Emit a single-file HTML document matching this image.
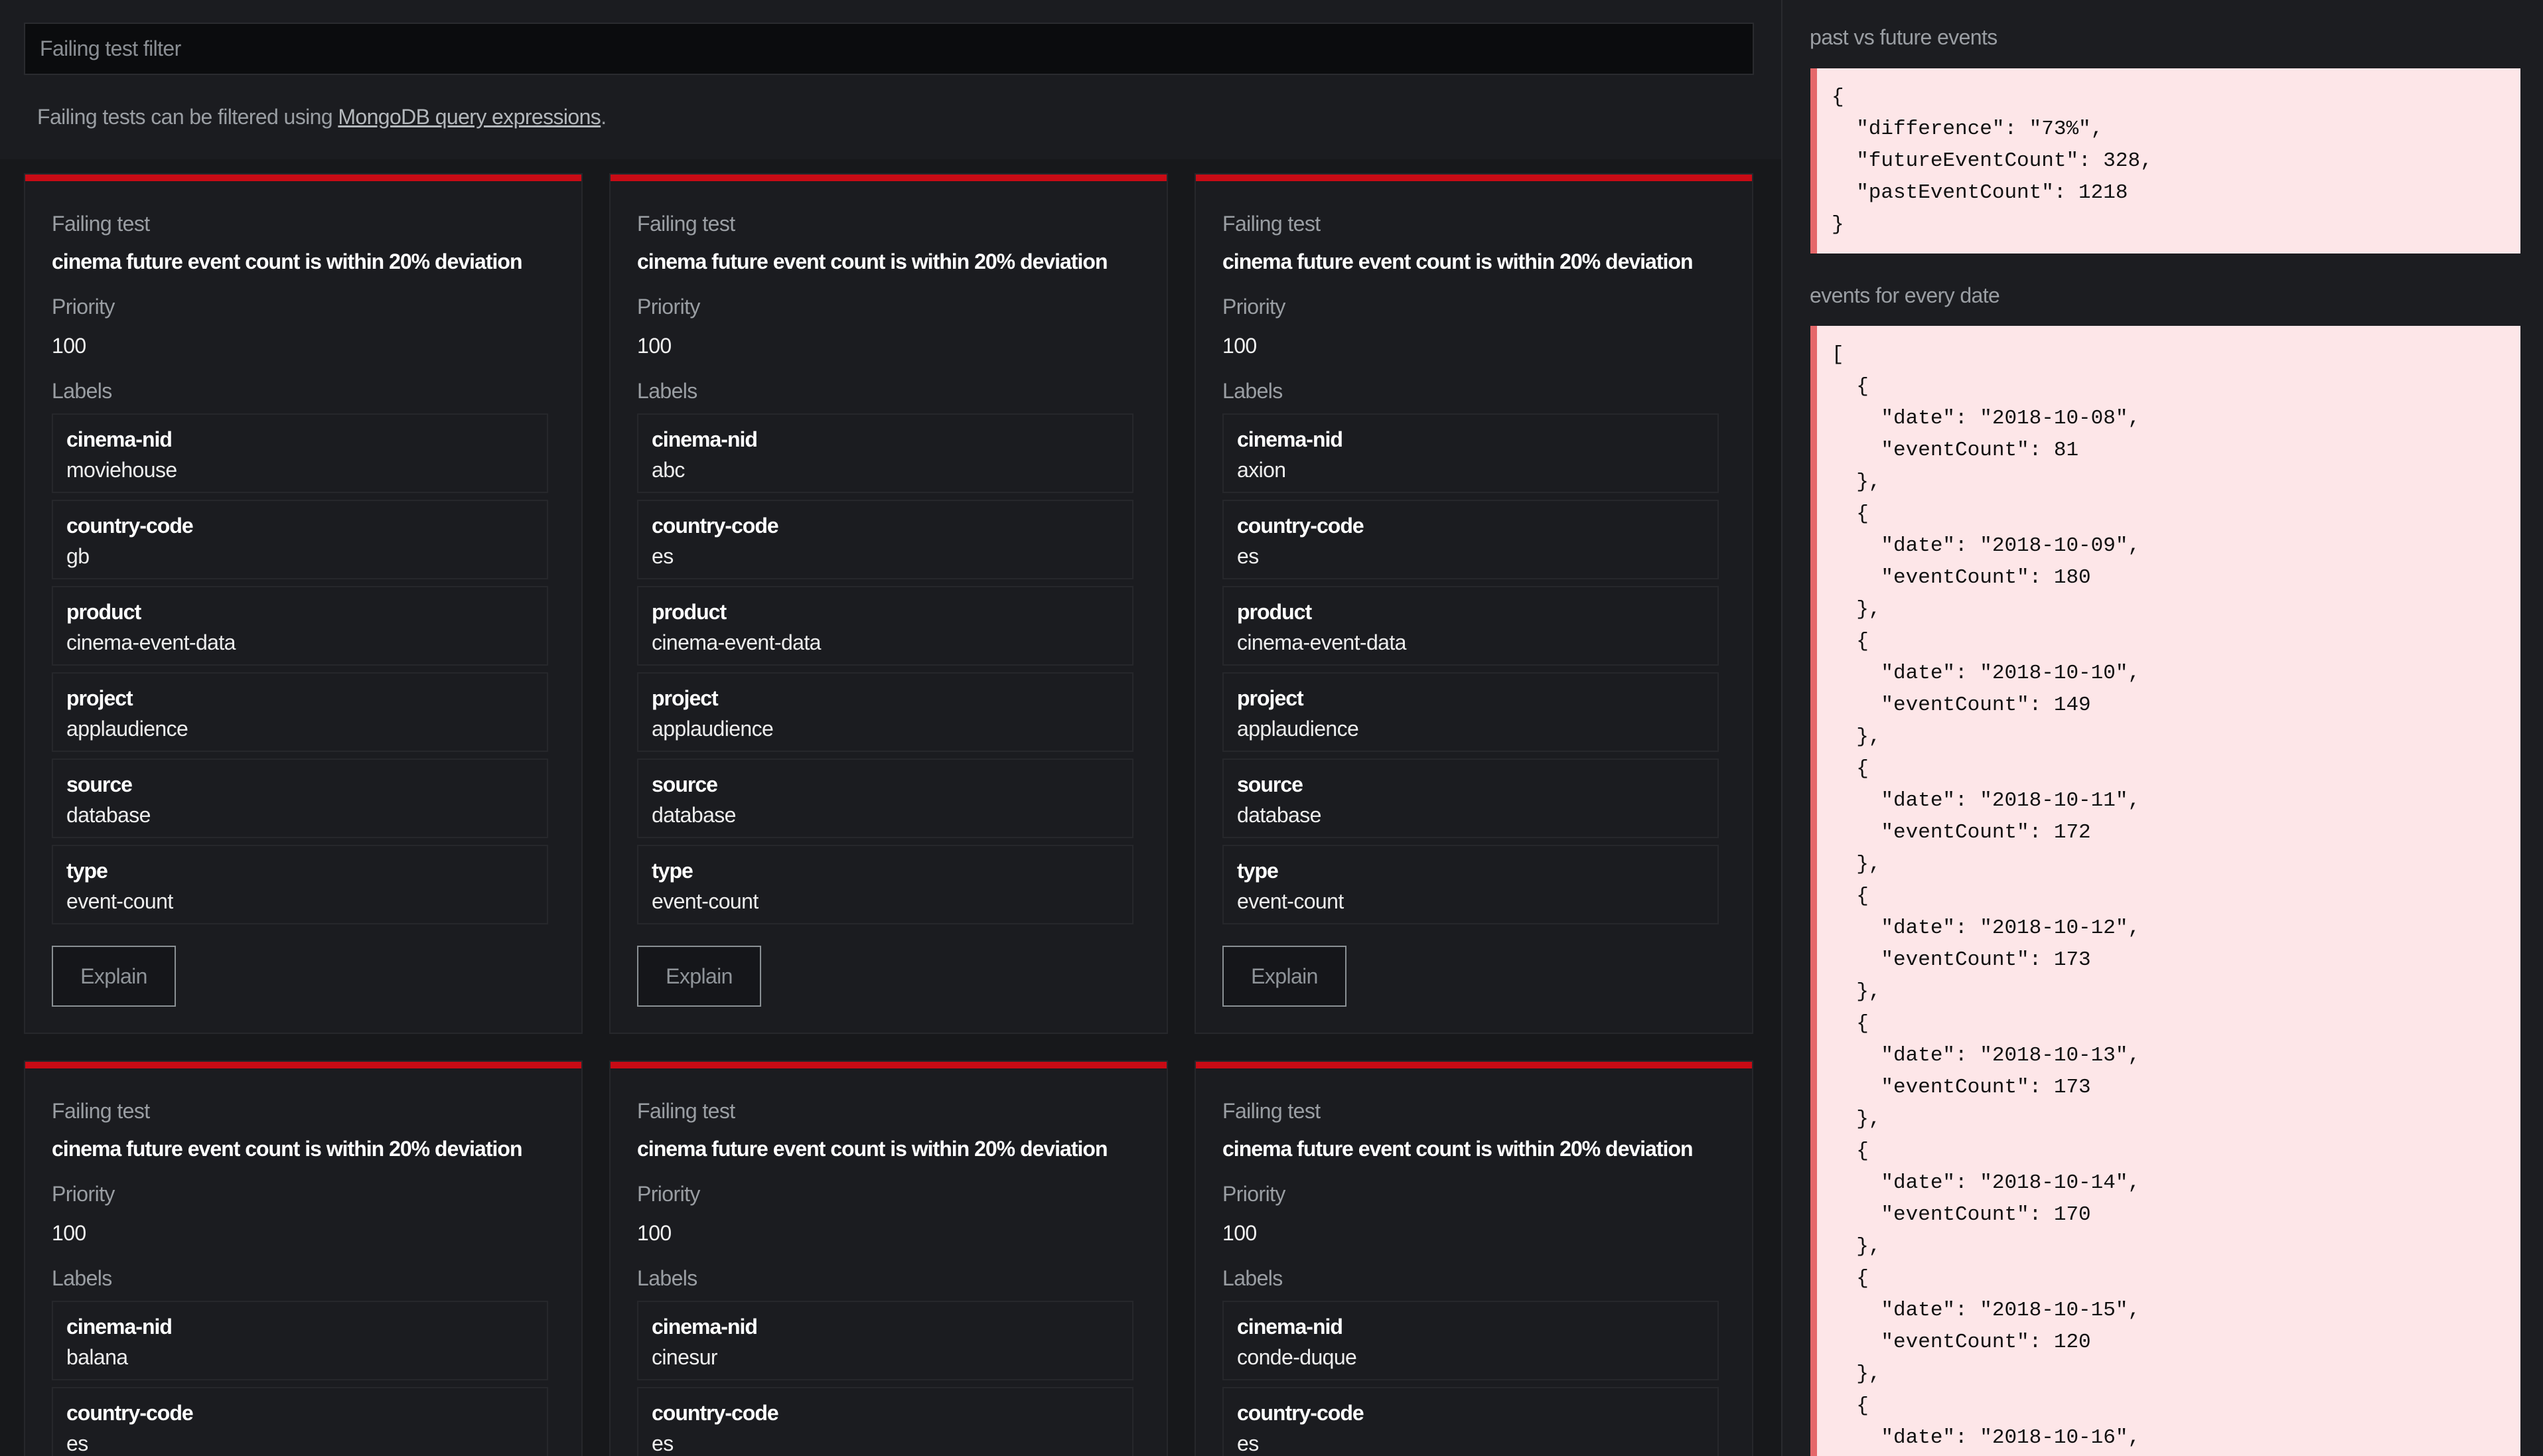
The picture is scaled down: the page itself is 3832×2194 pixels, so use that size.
<!DOCTYPE html>
<html><head><meta charset="utf-8"><style>
*{box-sizing:border-box;margin:0;padding:0}
html,body{width:3832px;height:2194px;overflow:hidden;background:#17181b;font-family:"Liberation Sans",sans-serif;font-size:32px;letter-spacing:-0.6px;position:relative}
.top{position:absolute;left:0;top:0;width:2684px;height:240px;background:#1b1c20}
.input{position:absolute;left:36px;top:34px;width:2607px;height:79px;background:#0b0c0e;border:2px solid #2a2b2f;color:#8a8e93;padding-left:22px;line-height:75px}
.help{position:absolute;left:56px;top:156px;color:#9a9ea3;line-height:40px}
.help u{color:#b4b8bc}
.card{position:absolute;width:842px;height:1297px;background:#1b1c20;border:2px solid #26272b;border-top:none;overflow:hidden}
.card.r2{height:596px;border-bottom:none}
.card .bar{position:absolute;left:0;right:0;top:0;height:12px;background:#c80b15;border-top:2px solid #26272b}
.t{position:absolute;left:40px;height:40px;line-height:40px;white-space:nowrap}
.g{color:#9a9ea3}
.w{color:#f0f0f0}
.b{font-weight:bold;color:#fff;letter-spacing:-1px}
.lb{position:absolute;left:40px;width:748px;height:120px;border:2px solid #26272b}
.lb .k{position:absolute;left:20px;top:17px;line-height:40px;font-weight:bold;color:#fff;letter-spacing:-1px}
.lb .v{position:absolute;left:20px;top:63px;line-height:40px;color:#eee}
.btn{position:absolute;left:40px;top:1164px;width:187px;height:92px;border:2px solid #8a9094;background:#15161a;color:#8f9499;text-align:center;line-height:88px}
.right{position:absolute;left:2684px;top:0;width:1148px;height:2194px;background:#1c1d21;border-left:2px solid #2a2b2f;overflow:hidden}
.h{position:absolute;left:41px;color:#9a9ea3;line-height:40px}
.code{position:absolute;left:42px;width:1070px;background:#fde6e8;border-left:10px solid #e5686b;font-family:"Liberation Mono",monospace;font-size:31px;letter-spacing:0;line-height:48px;color:#111;padding:20px 0 0 22px;white-space:pre;overflow:hidden}
</style></head><body>
<div class="top"></div>
<div class="input">Failing test filter</div>
<div class="help">Failing tests can be filtered using <u>MongoDB query expressions</u>.</div>

<div class="card" style="left:36px;top:261px">
<div class="bar"></div>
<div class="t g" style="top:56px">Failing test</div>
<div class="t b" style="top:113px">cinema future event count is within 20% deviation</div>
<div class="t g" style="top:181px">Priority</div>
<div class="t w" style="top:240px">100</div>
<div class="t g" style="top:308px">Labels</div>
<div class="lb" style="top:362px"><div class="k">cinema-nid</div><div class="v">moviehouse</div></div>
<div class="lb" style="top:492px"><div class="k">country-code</div><div class="v">gb</div></div>
<div class="lb" style="top:622px"><div class="k">product</div><div class="v">cinema-event-data</div></div>
<div class="lb" style="top:752px"><div class="k">project</div><div class="v">applaudience</div></div>
<div class="lb" style="top:882px"><div class="k">source</div><div class="v">database</div></div>
<div class="lb" style="top:1012px"><div class="k">type</div><div class="v">event-count</div></div>
<div class="btn">Explain</div>
</div>

<div class="card" style="left:918px;top:261px">
<div class="bar"></div>
<div class="t g" style="top:56px">Failing test</div>
<div class="t b" style="top:113px">cinema future event count is within 20% deviation</div>
<div class="t g" style="top:181px">Priority</div>
<div class="t w" style="top:240px">100</div>
<div class="t g" style="top:308px">Labels</div>
<div class="lb" style="top:362px"><div class="k">cinema-nid</div><div class="v">abc</div></div>
<div class="lb" style="top:492px"><div class="k">country-code</div><div class="v">es</div></div>
<div class="lb" style="top:622px"><div class="k">product</div><div class="v">cinema-event-data</div></div>
<div class="lb" style="top:752px"><div class="k">project</div><div class="v">applaudience</div></div>
<div class="lb" style="top:882px"><div class="k">source</div><div class="v">database</div></div>
<div class="lb" style="top:1012px"><div class="k">type</div><div class="v">event-count</div></div>
<div class="btn">Explain</div>
</div>

<div class="card" style="left:1800px;top:261px">
<div class="bar"></div>
<div class="t g" style="top:56px">Failing test</div>
<div class="t b" style="top:113px">cinema future event count is within 20% deviation</div>
<div class="t g" style="top:181px">Priority</div>
<div class="t w" style="top:240px">100</div>
<div class="t g" style="top:308px">Labels</div>
<div class="lb" style="top:362px"><div class="k">cinema-nid</div><div class="v">axion</div></div>
<div class="lb" style="top:492px"><div class="k">country-code</div><div class="v">es</div></div>
<div class="lb" style="top:622px"><div class="k">product</div><div class="v">cinema-event-data</div></div>
<div class="lb" style="top:752px"><div class="k">project</div><div class="v">applaudience</div></div>
<div class="lb" style="top:882px"><div class="k">source</div><div class="v">database</div></div>
<div class="lb" style="top:1012px"><div class="k">type</div><div class="v">event-count</div></div>
<div class="btn">Explain</div>
</div>

<div class="card r2" style="left:36px;top:1598px">
<div class="bar"></div>
<div class="t g" style="top:56px">Failing test</div>
<div class="t b" style="top:113px">cinema future event count is within 20% deviation</div>
<div class="t g" style="top:181px">Priority</div>
<div class="t w" style="top:240px">100</div>
<div class="t g" style="top:308px">Labels</div>
<div class="lb" style="top:362px"><div class="k">cinema-nid</div><div class="v">balana</div></div>
<div class="lb" style="top:492px"><div class="k">country-code</div><div class="v">es</div></div>
</div>

<div class="card r2" style="left:918px;top:1598px">
<div class="bar"></div>
<div class="t g" style="top:56px">Failing test</div>
<div class="t b" style="top:113px">cinema future event count is within 20% deviation</div>
<div class="t g" style="top:181px">Priority</div>
<div class="t w" style="top:240px">100</div>
<div class="t g" style="top:308px">Labels</div>
<div class="lb" style="top:362px"><div class="k">cinema-nid</div><div class="v">cinesur</div></div>
<div class="lb" style="top:492px"><div class="k">country-code</div><div class="v">es</div></div>
</div>

<div class="card r2" style="left:1800px;top:1598px">
<div class="bar"></div>
<div class="t g" style="top:56px">Failing test</div>
<div class="t b" style="top:113px">cinema future event count is within 20% deviation</div>
<div class="t g" style="top:181px">Priority</div>
<div class="t w" style="top:240px">100</div>
<div class="t g" style="top:308px">Labels</div>
<div class="lb" style="top:362px"><div class="k">cinema-nid</div><div class="v">conde-duque</div></div>
<div class="lb" style="top:492px"><div class="k">country-code</div><div class="v">es</div></div>
</div>

<div class="right">
<div class="h" style="top:36px">past vs future events</div>
<div class="code" style="top:103px;height:279px">{
  "difference": "73%",
  "futureEventCount": 328,
  "pastEventCount": 1218
}</div>
<div class="h" style="top:425px">events for every date</div>
<div class="code" style="top:491px;height:1703px">[
  {
    "date": "2018-10-08",
    "eventCount": 81
  },
  {
    "date": "2018-10-09",
    "eventCount": 180
  },
  {
    "date": "2018-10-10",
    "eventCount": 149
  },
  {
    "date": "2018-10-11",
    "eventCount": 172
  },
  {
    "date": "2018-10-12",
    "eventCount": 173
  },
  {
    "date": "2018-10-13",
    "eventCount": 173
  },
  {
    "date": "2018-10-14",
    "eventCount": 170
  },
  {
    "date": "2018-10-15",
    "eventCount": 120
  },
  {
    "date": "2018-10-16",</div>
</div>
</body></html>
